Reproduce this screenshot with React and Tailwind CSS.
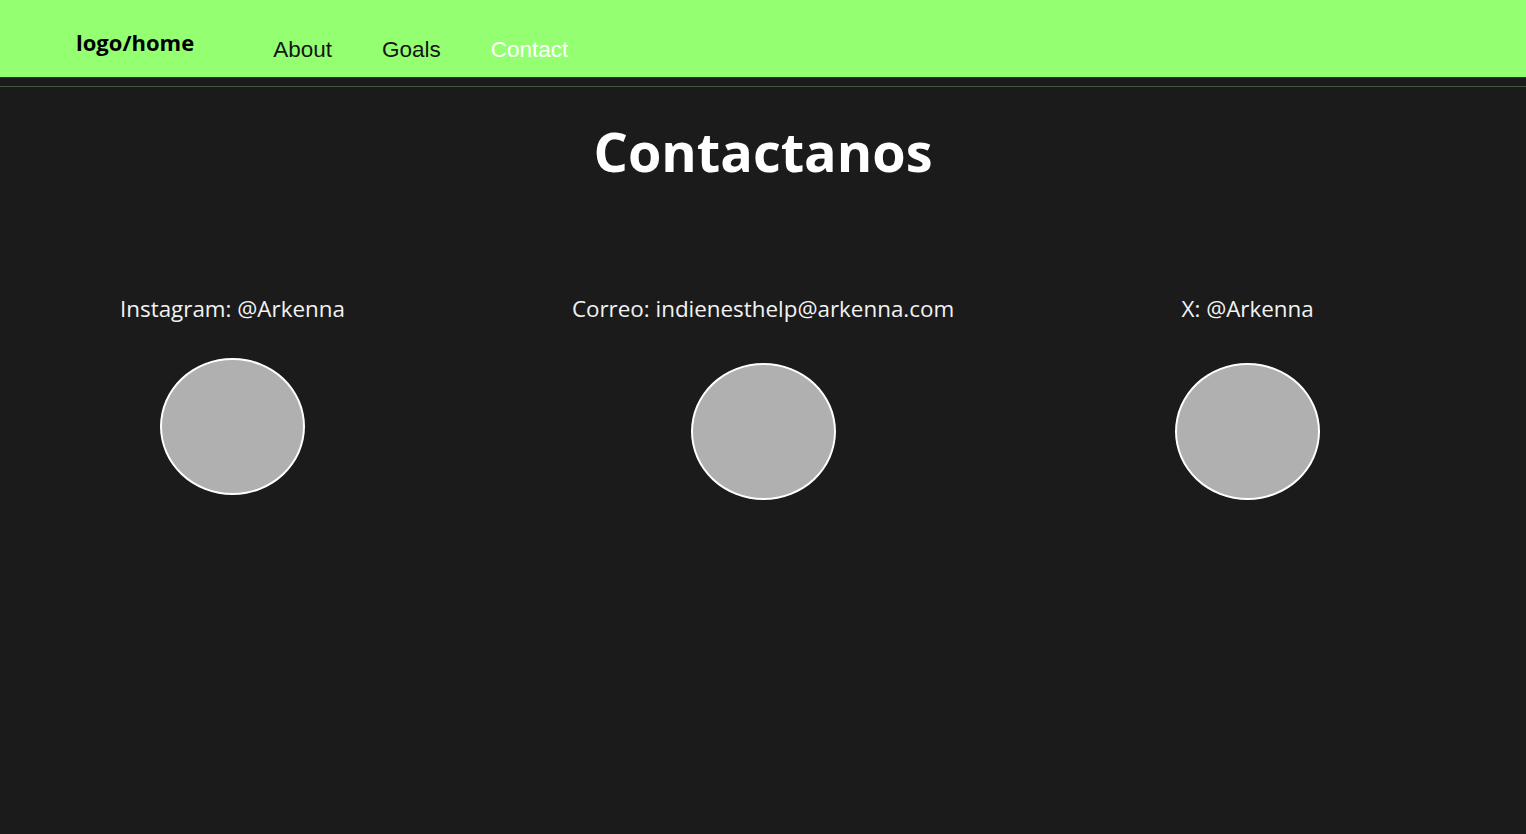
const contacts = [
  { label: "Instagram: @Arkenna", box: "", circleTop: "mt-[34px]" },
  { label: "Correo: indienesthelp@arkenna.com", box: "ml-[227px]", circleTop: "mt-[39px]" },
  { label: "X: @Arkenna", box: "ml-[221px]", circleTop: "mt-[39px]" },
];

function Navbar() {
  return (
    <header className="h-[78px] bg-[#95ff72] border-b border-[#2a3a25]">
      <nav className="flex items-start pl-[76px]">
        <a
          href="#"
          className="mt-[27px] text-[22px] font-bold leading-[30px] text-black [font-family:'Open_Sans',sans-serif]"
        >
          logo/home
        </a>
        <ul className="ml-[79px] mt-[36px] flex gap-[50px] text-[22.5px] leading-[28px] [font-family:'Liberation_Sans',Arial,sans-serif]">
          <li className="text-[#151515]">About</li>
          <li className="text-[#151515]">Goals</li>
          <li className="text-white">Contact</li>
        </ul>
      </nav>
    </header>
  );
}

export default function App() {
  return (
    <div className="min-h-[834px] bg-[#1b1b1b] text-white [font-family:'Open_Sans',sans-serif]">
      <Navbar />
      <div className="mt-[8px] h-px bg-[#465640]" />
      <main>
        <h1 className="mt-[27px] text-center text-[54px] font-bold leading-[74px]">
          Contactanos
        </h1>
        <section className="mt-[106px] flex items-start pl-[120px]">
          {contacts.map((c) => (
            <div key={c.label} className={`${c.box} flex flex-col items-center`}>
              <p className="text-[22.4px] leading-[30px] text-[#f2f2f2] whitespace-nowrap">
                {c.label}
              </p>
              <div
                className={`${c.circleTop} h-[137px] w-[145px] rounded-[50%] border-2 border-white bg-[#b0b0b0]`}
              />
            </div>
          ))}
        </section>
      </main>
    </div>
  );
}
